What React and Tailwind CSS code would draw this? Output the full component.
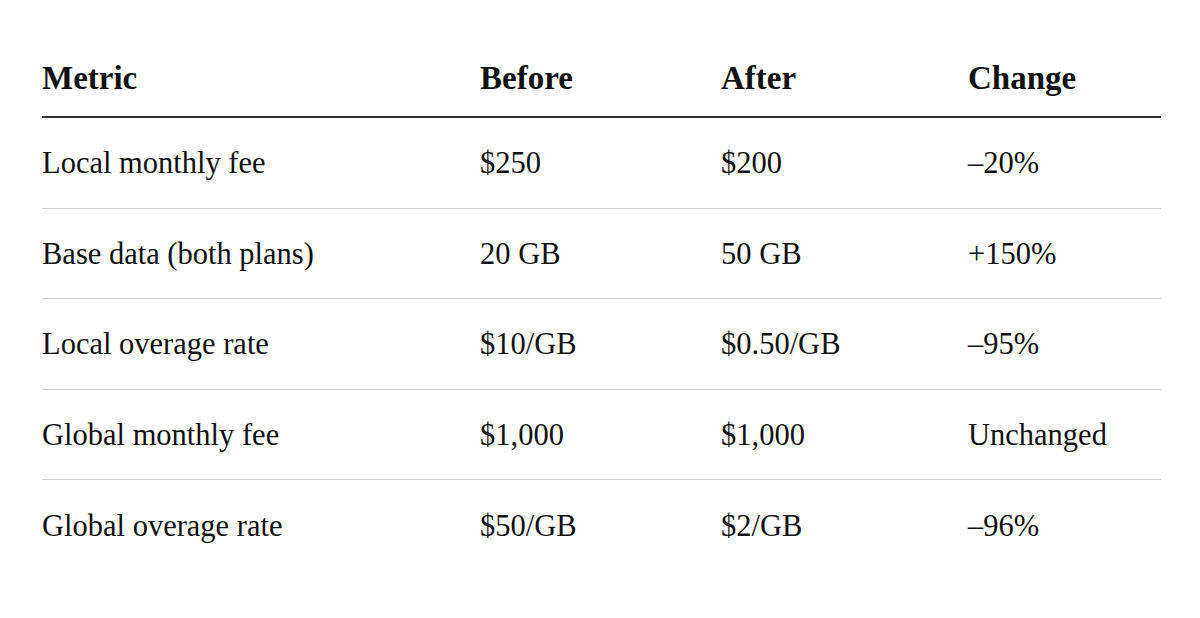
const ROWS = [
  { metric: 'Local monthly fee', before: '$250', after: '$200', change: '\u201320%' },
  { metric: 'Base data (both plans)', before: '20 GB', after: '50 GB', change: '+150%' },
  { metric: 'Local overage rate', before: '$10/GB', after: '$0.50/GB', change: '\u201395%' },
  { metric: 'Global monthly fee', before: '$1,000', after: '$1,000', change: 'Unchanged' },
  { metric: 'Global overage rate', before: '$50/GB', after: '$2/GB', change: '\u201396%' },
]

const COLS = 'grid grid-cols-[438px_241px_247px_1fr] items-center'

export default function App() {
  return (
    <div className="min-h-[618px] w-[1200px] bg-white pt-[40px] text-[#111]"
      style={{ fontFamily: '"Liberation Serif", "DejaVu Serif", serif' }}>
      <div className="ml-[42px] w-[1119px]">
        {/* Header */}
        <div className={`${COLS} h-[78px] border-b-2 border-[#333] pt-[2px] text-[33px] font-bold`}>
          <div>Metric</div>
          <div>Before</div>
          <div>After</div>
          <div>Change</div>
        </div>

        {/* Body */}
        {ROWS.map((r, i) => (
          <div key={r.metric}
            className={`${COLS} h-[90.5px] pt-[3px] text-[30.5px] ${i < ROWS.length - 1 ? 'border-b border-[#d2d2d2]' : ''}`}>
            <div>{r.metric}</div>
            <div>{r.before}</div>
            <div>{r.after}</div>
            <div>{r.change}</div>
          </div>
        ))}
      </div>
    </div>
  )
}
